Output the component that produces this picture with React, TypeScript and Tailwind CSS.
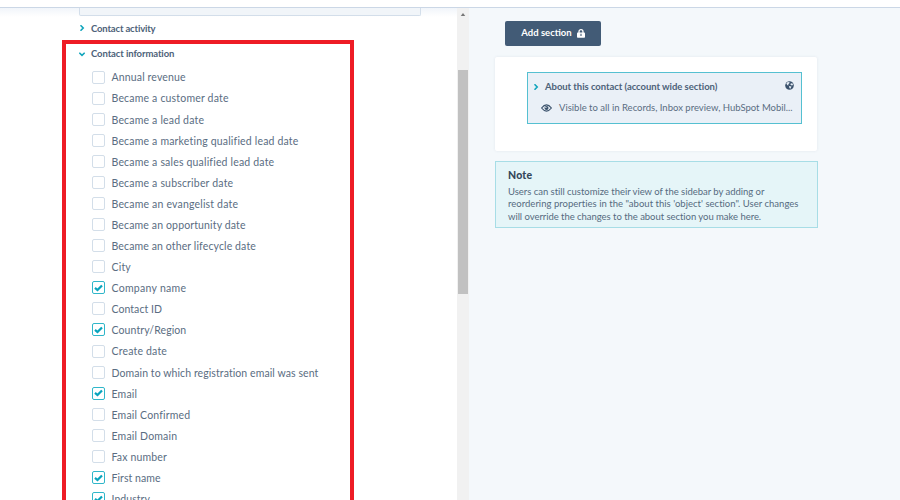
import React from "react";

type Property = { label: string; checked?: boolean; tracking?: string };

const properties: Property[] = [
  { label: "Annual revenue", tracking: "tracking-[0.15px]" },
  { label: "Became a customer date" },
  { label: "Became a lead date" },
  { label: "Became a marketing qualified lead date" },
  { label: "Became a sales qualified lead date" },
  { label: "Became a subscriber date" },
  { label: "Became an evangelist date" },
  { label: "Became an opportunity date", tracking: "tracking-[0.14px]" },
  { label: "Became an other lifecycle date", tracking: "tracking-[0.12px]" },
  { label: "City" },
  { label: "Company name", checked: true, tracking: "tracking-[0.28px]" },
  { label: "Contact ID", tracking: "tracking-[0.05px]" },
  { label: "Country/Region", checked: true, tracking: "tracking-[0.1px]" },
  { label: "Create date" },
  { label: "Domain to which registration email was sent", tracking: "tracking-[0.08px]" },
  { label: "Email", checked: true },
  { label: "Email Confirmed" },
  { label: "Email Domain" },
  { label: "Fax number", tracking: "tracking-[0.15px]" },
  { label: "First name", checked: true, tracking: "tracking-[0.05px]" },
  { label: "Industry", checked: true, tracking: "tracking-[0.05px]" },
];

function Chevron({ down = false }: { down?: boolean }) {
  return (
    <svg viewBox="0 0 6 6" className="h-1.5 w-1.5 shrink-0" fill="none" stroke="#10a5bc" strokeWidth="1.6">
      <path d={down ? "M.3 1.7 3 4.4 5.7 1.7" : "M1.5.3 4.2 3 1.5 5.7"} />
    </svg>
  );
}

function Checkbox({ checked = false }: { checked?: boolean }) {
  return (
    <span
      className={
        checked
          ? "flex h-[13px] w-[13px] shrink-0 items-center justify-center rounded-[2px] border border-[#30b7ca] bg-white"
          : "h-[13px] w-[13px] shrink-0 rounded-[2px] border border-[#d3dee9] bg-white"
      }
    >
      {checked && (
        <svg viewBox="0 0 9 8" className="h-2 w-[9px] shrink-0" fill="none" stroke="#08a4bd" strokeWidth="2.2">
          <path d="M1 3.8 3.5 6 8 1.4" />
        </svg>
      )}
    </span>
  );
}

function Globe() {
  return (
    <svg viewBox="0 0 9 9" className="h-[9px] w-[9px] shrink-0">
      <circle cx="4.5" cy="4.5" r="4.3" fill="#3b526c" />
      <path d="M1.3 2.4 2.8 1 4.7 1.2 4.2 2.5 3.2 3.2 3.7 4.3 2.4 4.2ZM5.7 2.4 7.3 2.2 8.1 4 6.9 4.6 5.4 3.8ZM4 4.9 6.5 5.5 5.4 7.8 4.4 7.1Z" fill="#e6edf5" />
    </svg>
  );
}

export default function App() {
  return (
    <div className="flex h-[500px] w-[900px] flex-col overflow-hidden bg-white font-['Lato',sans-serif] text-[#4d6279]">
      <header className="h-2 shrink-0 border-b border-[#cbd7e6] bg-white" />
      <div className="flex min-h-0 flex-1">
        <main className="h-full w-[457px] shrink-0 overflow-hidden bg-[linear-gradient(#f1f5fa,#ffffff_9px)]">
          <div className="ml-[79px] h-2 w-[342px] rounded-b-[2px] border border-t-0 border-[#d3deea] bg-[#f1f5f9]" />
          <div className="ml-[79px] flex h-6 items-center gap-[6px] text-[9.5px] font-bold leading-6">
            <Chevron />
            <span className="pt-px tracking-[-0.16px]">Contact activity</span>
          </div>
          <section className="ml-[62px] h-[480px] w-[292px] border-4 border-[#ee1c25]">
            <div className="ml-[13px] flex h-[22.5px] items-center gap-[6px] pb-[3px] text-[9.5px] font-bold">
              <Chevron down />
              <span className="tracking-[-0.1px]">Contact information</span>
            </div>
            <ul className="ml-[26px] text-[#5a6d82]">
              {properties.map((p) => (
                <li key={p.label} className="flex h-[21.08px] items-center gap-[6.5px] whitespace-nowrap text-[10.5px]">
                  <Checkbox checked={p.checked} />
                  <span className={`pt-[2.5px] ${p.tracking ?? "tracking-[0.18px]"}`}>{p.label}</span>
                </li>
              ))}
            </ul>
          </section>
        </main>
        <div className="flex w-3 shrink-0 flex-col items-center bg-[#f1f1f1]">
          <svg viewBox="0 0 6 4" className="mt-[5px] h-[3px] w-[6px] shrink-0">
            <path d="M3 0 6 4H0Z" fill="#777" />
          </svg>
          <div className="mt-[54px] h-[224px] w-[10px] bg-[#c1c1c1]" />
        </div>
        <aside className="flex-1 bg-[#f4f8fb] pl-[26px]">
          <button className="ml-[10px] mt-[13px] flex h-[25px] w-24 items-center justify-center gap-[5px] rounded-[2px] bg-[#425b76] pb-px text-[9.5px] font-bold text-white">
            <span>Add section</span>
            <svg viewBox="0 0 8 9" className="h-[9px] w-2">
              <path d="M2 4V2.7a2 2 0 0 1 4 0V4" fill="none" stroke="white" strokeWidth="1.3" />
              <rect y="3.5" width="8" height="5.2" rx=".8" fill="white" />
              <path d="M4 4.8v2.2" stroke="#425b76" strokeWidth="1.1" />
            </svg>
          </button>
          <div className="mt-[11px] h-[94px] w-[322px] rounded-[2px] bg-white pl-8 pt-[15px] shadow-[0_0_3px_#dfe7ed]">
            <div className="h-[52px] w-[275px] border border-[#55c0d1] bg-[#eaf0f7] pl-[5px] pr-[7px] pt-[3px]">
              <div className="flex h-[21px] items-center text-[9.5px] font-bold">
                <Chevron />
                <span className="ml-[6px] flex-1 whitespace-nowrap pt-[2px] tracking-[-0.05px]">About this contact (account wide section)</span>
                <div className="mb-[3px]">
                  <Globe />
                </div>
              </div>
              <div className="flex h-[21px] items-center pl-2 text-[9.5px] text-[#5a6d82]">
                <svg viewBox="0 0 11 8" className="h-2 w-[11px] shrink-0">
                  <path d="M.6 4Q5.5-2.2 10.4 4 5.5 10.2.6 4Z" fill="none" stroke="#3b526c" strokeWidth="1.2" />
                  <circle cx="5.5" cy="4" r="2" fill="#3b526c" />
                  <circle cx="4.9" cy="3.4" r=".6" fill="#eaf0f7" />
                </svg>
                <span className="ml-[7px] whitespace-nowrap pt-px">Visible to all in Records, Inbox preview, HubSpot Mobil...</span>
              </div>
            </div>
          </div>
          <div className="mt-[10px] h-[67px] w-[323px] border border-[#a7dde6] bg-[#e5f5f8] pl-[12px] pt-[5px]">
            <h2 className="text-[10.5px] font-black leading-4 tracking-[0.2px] text-[#33475b]">Note</h2>
            <p className="mt-[3px] whitespace-nowrap text-[9.5px] leading-[12.4px] text-[#566b80]">
              <span className="block tracking-[-0.03px]">Users can still customize their view of the sidebar by adding or</span>
              <span className="block tracking-[0.02px]">reordering properties in the "about this 'object' section". User changes</span>
              <span className="block tracking-[-0.04px]">will override the changes to the about section you make here.</span>
            </p>
          </div>
        </aside>
      </div>
    </div>
  );
}
